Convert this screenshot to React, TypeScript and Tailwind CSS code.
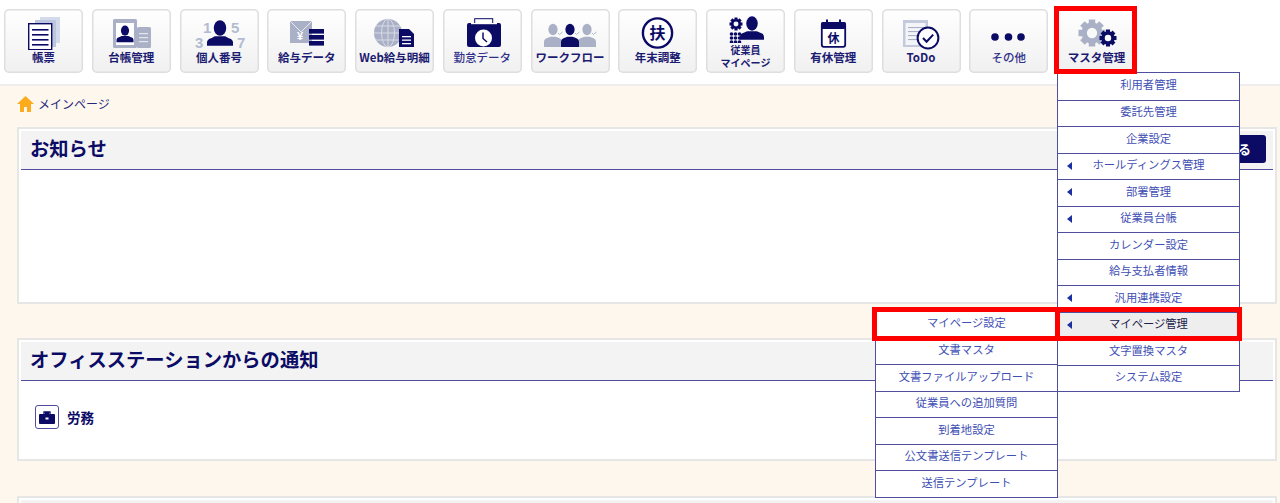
import type { ReactNode } from "react";

const NAVY = "#0b0b66";
const GREY = "#aab1c6";

const Gear = ({ cx, cy, r, fill }: { cx: number; cy: number; r: number; fill: string }) => (
  <g>
    {[0, 45, 90, 135, 180, 225, 270, 315].map((a) => (
      <rect
        key={a}
        x={cx - r * 0.24}
        y={cy - r}
        width={r * 0.48}
        height={r * 0.5}
        fill={fill}
        transform={`rotate(${a} ${cx} ${cy})`}
      />
    ))}
    <circle cx={cx} cy={cy} r={r * 0.78} fill={fill} />
    <circle cx={cx} cy={cy} r={r * 0.38} fill="#f9f9f9" />
  </g>
);

const Person = ({ cx, top, w, fill }: { cx: number; top: number; w: number; fill: string }) => (
  <g fill={fill}>
    <ellipse cx={cx} cy={top + w * 0.27} rx={w * 0.24} ry={w * 0.3} />
    <path
      d={`M${cx - w / 2} ${top + w * 0.95} v-${w * 0.12} q0 -${w * 0.14} ${w * 0.18} -${w * 0.18} l${w * 0.12} -${w * 0.06} h${w * 0.4} l${w * 0.12} ${w * 0.06} q${w * 0.18} ${w * 0.04} ${w * 0.18} ${w * 0.18} v${w * 0.12} z`}
    />
  </g>
);

// tall figure used by the workflow icon: head on top, block body below
const FlowPerson = ({ cx, fill }: { cx: number; fill: string }) => (
  <g fill={fill}>
    <ellipse cx={cx} cy={20.5} rx={4.6} ry={5.8} />
    <path d={`M${cx - 9} 38 v-5 q0 -3 3 -4 l3.5 -1.2 h5 l3.5 1.2 q3 1 3 4 v5 z`} />
  </g>
);

const icons: Record<string, ReactNode> = {
  report: (
    <>
      <rect x="36" y="8" width="20" height="26" fill="#d3daea" />
      <rect x="31" y="11" width="21" height="27" fill="#bcc6de" />
      <rect x="24.7" y="14.7" width="23" height="26" fill="#fff" stroke={NAVY} strokeWidth="1.4" />
      {[20, 25, 30, 35].map((y) => (
        <rect key={y} x="28" y={y} width="16.5" height="1.6" fill={NAVY} />
      ))}
    </>
  ),
  ledger: (
    <>
      <rect x="21" y="10" width="24" height="29" rx="1.5" fill={GREY} />
      <rect x="45" y="18" width="14" height="21" rx="1.5" fill={GREY} />
      <rect x="24" y="14" width="18" height="22" fill="#fff" />
      <Person cx={33} top={17} w={17} fill={NAVY} />
      {[24, 28, 32].map((y) => (
        <rect key={y} x="47" y={y} width="9" height="1.2" fill="#e4e6ee" />
      ))}
    </>
  ),
  number: (
    <>
      <Person cx={40} top={12} w={26} fill={NAVY} />
      <g fill="#b4bbd0" fontFamily="'Liberation Sans', sans-serif" fontWeight="700" fontSize="15">
        <text x="23" y="24">1</text>
        <text x="51" y="24">5</text>
        <text x="15" y="39">3</text>
        <text x="57" y="39">7</text>
      </g>
    </>
  ),
  salary: (
    <>
      <rect x="23" y="12" width="22" height="22" fill={GREY} />
      <path d="M23 12 L34 23 L45 12" fill="none" stroke="#e8eaf1" strokeWidth="1" />
      <text x="33" y="31" textAnchor="middle" fill="#fff" fontSize="11" fontWeight="700" fontFamily="'Liberation Sans', sans-serif">¥</text>
      {[20, 26, 32].map((y) => (
        <rect key={y} x="42" y={y} width="15" height="4.6" fill={NAVY} />
      ))}
    </>
  ),
  web: (
    <>
      <circle cx="33" cy="24" r="14" fill={GREY} />
      <g fill="none" stroke="#d7dbe6" strokeWidth="1">
        <ellipse cx="33" cy="24" rx="6.5" ry="14" />
        <path d="M33 10 V38 M19 24 H47 M21 17 H45 M21 31 H45" />
      </g>
      <path d="M44 20 H54 L59 25 V38 H44 Z" fill={NAVY} />
      {[27, 30.5, 34].map((y) => (
        <rect key={y} x="47" y={y} width="9" height="1.3" fill="#fff" />
      ))}
    </>
  ),
  attend: (
    <>
      <rect x="31.7" y="9.7" width="18" height="9" fill="#fff" stroke={NAVY} strokeWidth="1" />
      <rect x="24" y="14" width="34" height="24" rx="2" fill={NAVY} />
      <rect x="28" y="14" width="26" height="1.2" fill="#fff" />
      <circle cx="40.5" cy="29" r="8.5" fill="#fff" />
      <path d="M40 23.5 V29.5 L44 33" fill="none" stroke={NAVY} strokeWidth="1.5" />
    </>
  ),
  flow: (
    <>
      <FlowPerson cx={22} fill={GREY} />
      <FlowPerson cx={56} fill={GREY} />
      <FlowPerson cx={39} fill={NAVY} />
      <g fill="none" stroke={GREY} strokeWidth="0.9">
        <path d="M27 24 l1.5 1.5 l3 -2.5" />
        <path d="M44 24 l1.5 1.5 l3 -2.5" />
        <path d="M61 24 l1.5 1.5 l3 -2.5" />
      </g>
    </>
  ),
  yearend: (
    <>
      <circle cx="39.5" cy="24" r="14.6" fill="#fff" stroke={NAVY} strokeWidth="2.4" />
      <text x="39.5" y="30" textAnchor="middle" fill={NAVY} fontSize="16" fontWeight="700" fontFamily="'Noto Sans CJK JP', sans-serif">扶</text>
    </>
  ),
  mypage: (
    <>
      <Gear cx={30} cy={15} r={6.5} fill={NAVY} />
      <g fill={NAVY}>
        {[25.5, 29.5, 33.5].map((x) =>
          [25, 29, 33].map((y) => <circle key={`${x}-${y}`} cx={x} cy={y} r="1.8" />),
        )}
      </g>
      <Person cx={46} top={8} w={24} fill={NAVY} />
    </>
  ),
  leave: (
    <>
      <rect x="27.8" y="13.8" width="23.4" height="24" rx="2" fill="#fff" stroke={NAVY} strokeWidth="1.8" />
      <rect x="27" y="13" width="25" height="7" rx="2" fill={NAVY} />
      <rect x="32" y="10.5" width="2" height="4" fill={NAVY} />
      <rect x="45" y="10.5" width="2" height="4" fill={NAVY} />
      <text x="39.5" y="34" textAnchor="middle" fill={NAVY} fontSize="12" fontWeight="700" fontFamily="'Noto Sans CJK JP', sans-serif">休</text>
    </>
  ),
  todo: (
    <>
      <rect x="21" y="11" width="25" height="27" fill="#c3cadc" />
      <rect x="23.5" y="14" width="20" height="22" fill="#f4f5f9" />
      {[18, 22, 26, 30].map((y) => (
        <rect key={y} x="26" y={y} width="15" height="1.1" fill="#aab1c6" />
      ))}
      <circle cx="46" cy="29" r="10.4" fill="#fff" stroke={NAVY} strokeWidth="2" />
      <path d="M41 29 L44.6 32.8 L51.2 25.6" fill="none" stroke={NAVY} strokeWidth="2" />
    </>
  ),
  other: (
    <g fill={NAVY}>
      <circle cx="26" cy="28" r="3.8" />
      <circle cx="39.5" cy="28" r="3.8" />
      <circle cx="52" cy="28" r="3.8" />
    </g>
  ),
  master: (
    <>
      <Gear cx={35} cy={24} r={13.5} fill={GREY} />
      <Gear cx={51} cy={29} r={8.5} fill={NAVY} />
    </>
  ),
};

const navItems = [
  { icon: "report", label: ["帳票"] },
  { icon: "ledger", label: ["台帳管理"] },
  { icon: "number", label: ["個人番号"] },
  { icon: "salary", label: ["給与データ"] },
  { icon: "web", label: ["Web給与明細"] },
  { icon: "attend", label: ["勤怠データ"], light: true },
  { icon: "flow", label: ["ワークフロー"] },
  { icon: "yearend", label: ["年末調整"] },
  { icon: "mypage", label: ["従業員", "マイページ"] },
  { icon: "leave", label: ["有休管理"] },
  { icon: "todo", label: ["ToDo"] },
  { icon: "other", label: ["その他"], light: true },
  { icon: "master", label: ["マスタ管理"] },
];

const mainMenu = [
  { label: "利用者管理" },
  { label: "委託先管理" },
  { label: "企業設定" },
  { label: "ホールディングス管理", arrow: true },
  { label: "部署管理", arrow: true },
  { label: "従業員台帳", arrow: true },
  { label: "カレンダー設定" },
  { label: "給与支払者情報" },
  { label: "汎用連携設定", arrow: true },
  { label: "マイページ管理", arrow: true, active: true },
  { label: "文字置換マスタ" },
  { label: "システム設定" },
];

const subMenu = [
  { label: "マイページ設定" },
  { label: "文書マスタ" },
  { label: "文書ファイルアップロード" },
  { label: "従業員への追加質問" },
  { label: "到着地設定" },
  { label: "公文書送信テンプレート" },
  { label: "送信テンプレート" },
];

type MenuItem = { label: string; arrow?: boolean; active?: boolean };

const Menu = ({ items, className }: { items: MenuItem[]; className: string }) => (
  <div className={`absolute w-[183px] border border-[#4f4f9e] bg-white ${className}`}>
    {items.map((item, i) => (
      <div
        key={item.label}
        className={`relative flex h-[26.5px] items-center justify-center pb-[3px] text-[11.3px] ${
          i > 0 ? "border-t border-[#4f4f9e]" : ""
        } ${item.active ? "bg-[#eeeeee] text-[#20204a]" : "bg-white text-[#3f4fb4]"}`}
      >
        {item.arrow && (
          <svg className="absolute left-[9px] top-[8px]" width="5" height="8" viewBox="0 0 5 8">
            <path d="M5 0 V8 L0 4 Z" fill="#1c2fa0" />
          </svg>
        )}
        {item.label}
      </div>
    ))}
  </div>
);

const Panel = ({ title, action, className, children }: { title: string; action?: boolean; className: string; children?: ReactNode }) => (
  <section className={`border-2 border-[#e6e6e6] bg-white p-[2px] ${className}`}>
    <div className="flex h-[39px] items-center justify-between border-b border-[#4f4f9e] bg-[#f3f3f3] pb-[3px] pl-[9px] pr-[7px]">
      <h2 className="text-[19.3px] font-bold text-[#0b0b66]">{title}</h2>
      {action && (
        <button className="h-[28px] rounded-[3px] bg-[#0b0b66] px-[15px] text-[13px] font-bold text-white">
          もっと見る
        </button>
      )}
    </div>
    {children}
  </section>
);

export default function App() {
  return (
    <div className="relative h-[503px] w-[1280px] overflow-hidden bg-[#fef7ee] font-['Noto_Sans_CJK_JP','Noto_Sans',sans-serif]">
      <header className="flex h-[86px] gap-[8.75px] border-b-2 border-[#eeeeee] bg-white pl-[4px] pt-[9px]">
        {navItems.map((item) => (
          <button
            key={item.icon}
            className="flex h-[64px] w-[79px] shrink-0 flex-col items-center overflow-hidden rounded-[5px] bg-gradient-to-b from-white to-[#f0f0f0] shadow-[inset_0_0_0_1.5px_#dedede]"
          >
            <svg
              width="79"
              height={item.label.length > 1 ? 34 : 41}
              viewBox={`0 0 79 ${item.label.length > 1 ? 34 : 41}`}
              className="shrink-0"
            >
              {icons[item.icon]}
            </svg>
            {item.label.map((line) => (
              <span
                key={line}
                className={`whitespace-nowrap ${item.light ? "font-medium text-[#30308a]" : "font-bold text-[#1b1b72]"} ${
                  item.label.length > 1 ? "text-[10px] leading-[13px]" : "text-[11.5px] leading-[14px]"
                }`}
              >
                {line}
              </span>
            ))}
          </button>
        ))}
      </header>

      <main className="px-[17px] pr-[3px]">
        <div className="flex h-[41px] items-center gap-[4px] pb-[6px] text-[12px] text-[#27277a]">
          <svg width="17" height="16" viewBox="0 0 17 16">
            <path d="M8.5 0 L17 8 H14 V16 H10 V11 H7 V16 H3 V8 H0 Z" fill="#fbab1b" />
          </svg>
          メインページ
        </div>

        <Panel title="お知らせ" action className="h-[177px]" />

        <Panel title="オフィスステーションからの通知" className="mt-[34px] h-[123px]">
          <div className="flex items-center gap-[8px] pl-[14px] pt-[24px]">
            <span className="flex h-[24px] w-[24px] items-center justify-center rounded-[3px] border border-[#4f4f9e]">
              <svg width="16" height="13" viewBox="0 0 16 13">
                <path d="M5 3 V1 H11 V3 M6 2.5 H10" fill="none" stroke={NAVY} strokeWidth="1.3" />
                <rect y="3" width="16" height="10" rx="1" fill={NAVY} />
                <rect x="6.5" y="6.5" width="3" height="2" fill="#fff" />
              </svg>
            </span>
            <span className="text-[13.5px] font-bold text-[#0b0b66]">労務</span>
          </div>
        </Panel>

        <Panel title="" className="mt-[35px] h-[60px]" />
      </main>

      <Menu items={mainMenu} className="left-[1057px] top-[72px]" />
      <Menu items={subMenu} className="left-[875px] top-[310px]" />

      <div className="absolute left-[1054px] top-[6px] h-[68px] w-[83px] border-[5px] border-[#ff0000]" />
      <div className="absolute left-[872px] top-[307px] h-[34px] w-[188px] border-[5px] border-[#ff0000]" />
      <div className="absolute left-[1055px] top-[307px] h-[34px] w-[187px] border-[5px] border-[#ff0000]" />
    </div>
  );
}
